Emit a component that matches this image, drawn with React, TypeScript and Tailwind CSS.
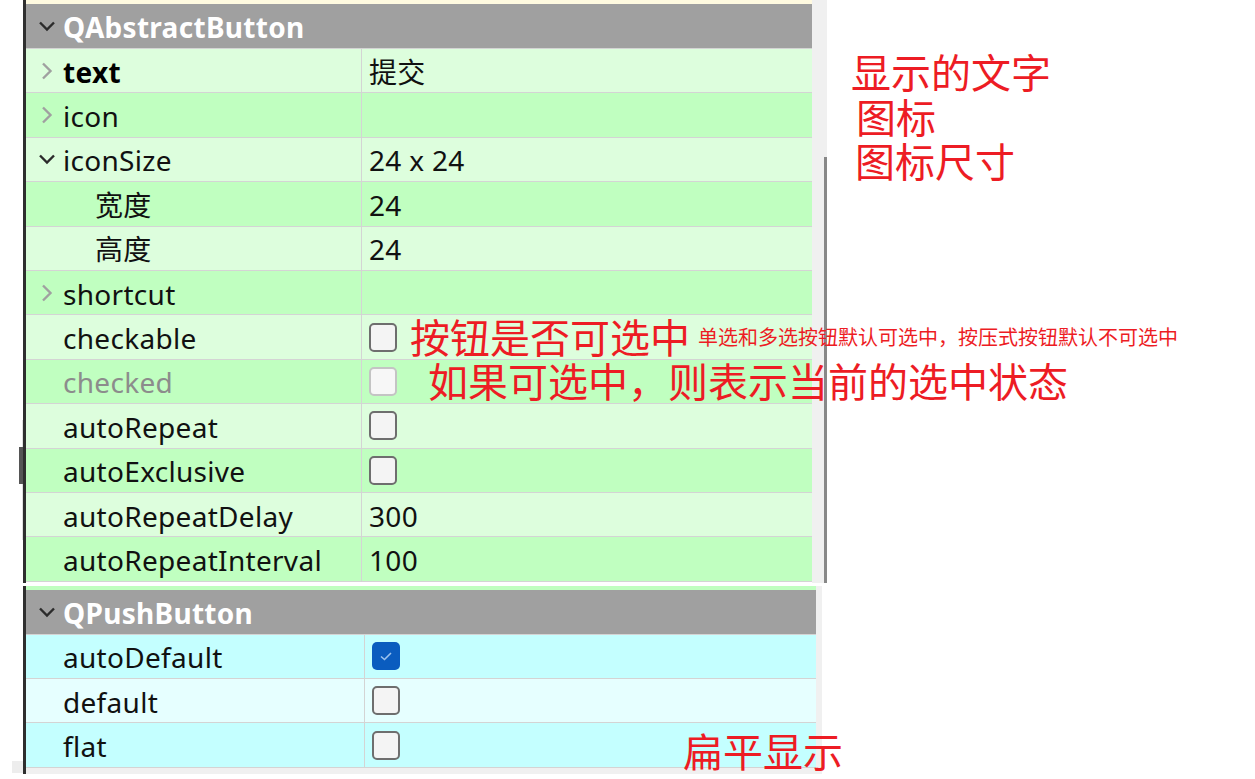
import React from 'react';

type Row = {
  name: string;
  value?: string;
  arrow?: 'right' | 'down';
  bold?: boolean;
  indent?: boolean;
  disabled?: boolean;
  check?: 'off' | 'on';
  bg: string;
};

const abstractRows: Row[] = [
  { name: 'text', bold: true, arrow: 'right', value: '提交', bg: 'bg-[#ddfedd]' },
  { name: 'icon', arrow: 'right', bg: 'bg-[#c0ffc0]' },
  { name: 'iconSize', arrow: 'down', value: '24 x 24', bg: 'bg-[#ddfedd]' },
  { name: '宽度', indent: true, value: '24', bg: 'bg-[#c0ffc0]' },
  { name: '高度', indent: true, value: '24', bg: 'bg-[#ddfedd]' },
  { name: 'shortcut', arrow: 'right', bg: 'bg-[#c0ffc0]' },
  { name: 'checkable', check: 'off', bg: 'bg-[#ddfedd]' },
  { name: 'checked', check: 'off', disabled: true, bg: 'bg-[#c0ffc0]' },
  { name: 'autoRepeat', check: 'off', bg: 'bg-[#ddfedd]' },
  { name: 'autoExclusive', check: 'off', bg: 'bg-[#c0ffc0]' },
  { name: 'autoRepeatDelay', value: '300', bg: 'bg-[#ddfedd]' },
  { name: 'autoRepeatInterval', value: '100', bg: 'bg-[#c0ffc0]' },
];

const pushRows: Row[] = [
  { name: 'autoDefault', check: 'on', bg: 'bg-[#c4ffff]' },
  { name: 'default', check: 'off', bg: 'bg-[#e6ffff]' },
  { name: 'flat', check: 'off', bg: 'bg-[#c4ffff]' },
];

function Chevron({ dir }: { dir: 'right' | 'down' }) {
  if (dir === 'right') {
    return (
      <svg width="16" height="20" viewBox="0 0 16 20" className="shrink-0">
        <path d="M4 2.5 L11.5 10 L4 17.5" fill="none" stroke="#a0a0a0" strokeWidth="2.4" />
      </svg>
    );
  }
  return (
    <svg width="18" height="12" viewBox="0 0 18 12" className="shrink-0">
      <path d="M2 2.5 L9 9.5 L16 2.5" fill="none" stroke="#2b2b2b" strokeWidth="2.4" />
    </svg>
  );
}

function CheckBox({ on, disabled }: { on?: boolean; disabled?: boolean }) {
  if (on) {
    return (
      <div className="w-[28px] h-[28px] rounded-[5px] bg-[#0a5cbf] flex items-center justify-center">
        <svg width="16" height="12" viewBox="0 0 16 12">
          <path d="M3 6.5 L6.5 9.5 L13 3" fill="none" stroke="#9cc3ee" strokeWidth="1.6" />
        </svg>
      </div>
    );
  }
  return (
    <div
      className={`w-[28px] h-[29px] rounded-[5px] border-2 ${
        disabled ? 'border-[#c4c4c4] bg-[#f7f7f7]' : 'border-[#6e6e6e] bg-[#f4f4f4]'
      }`}
    />
  );
}

function PropRow({ row, split }: { row: Row; split: number }) {
  return (
    <div className={`flex h-[44.4px] box-border border-b border-[#d4d4d4] ${row.bg}`}>
      <div
        className="flex items-center h-full border-r border-[#d4d4d4] shrink-0"
        style={{ width: split }}
      >
        <div className="w-[37px] flex items-center justify-center pl-[4px]">
          {row.arrow && <Chevron dir={row.arrow} />}
        </div>
        <span
          className={`text-[28px] leading-none tracking-[0.3px] pt-[2px] ${row.indent ? 'pl-[32px]' : ''} ${
            row.bold ? 'font-bold text-black' : row.disabled ? 'text-[#8c8c8c]' : 'text-[#111]'
          }`}
        >
          {row.name}
        </span>
      </div>
      <div className="flex items-center pl-[7px] flex-1">
        {row.check ? (
          <CheckBox on={row.check === 'on'} disabled={row.disabled} />
        ) : (
          <span className="text-[28px] leading-none text-[#111] tracking-[0.3px] pt-[2px]">{row.value}</span>
        )}
      </div>
    </div>
  );
}

function Header({ title }: { title: string }) {
  return (
    <div className="flex items-center h-[45px] box-border border-b border-[#d4d4d4] bg-[#a0a0a0]">
      <div className="w-[37px] flex items-center justify-center pl-[4px]">
        <Chevron dir="down" />
      </div>
      <span className="text-[28px] leading-none font-bold text-white tracking-[0.3px] pt-[2px]">{title}</span>
    </div>
  );
}

const note = 'absolute text-[#ed1c24] whitespace-nowrap';

export default function App() {
  return (
    <div
      className="relative w-[1255px] h-[779px] bg-white overflow-hidden"
      style={{ fontFamily: '"Noto Sans", "Noto Sans CJK SC", sans-serif' }}
    >
      {/* upper property panel */}
      <div className="ml-[23px] flex w-[804px]">
        <div className="w-[789px] border-l-[3px] border-[#2f2f2f] pb-[1px]">
          <div className="h-[4px] bg-[#fffae0]" />
          <Header title="QAbstractButton" />
          {abstractRows.map((r) => (
            <PropRow key={r.name} row={r} split={336} />
          ))}
        </div>
        <div className="w-[15px] bg-[#f0f0f0] flex justify-end">
          <div className="w-[3px] mt-[157px] bg-[#888]" />
        </div>
      </div>

      {/* lower property panel */}
      <div className="ml-[23px] mt-[3px] flex w-[799px]">
        <div className="w-[793px] border-l-[3px] border-[#2f2f2f]">
          <div className="h-[4px] bg-[#c0ffc0]" />
          <Header title="QPushButton" />
          {pushRows.map((r) => (
            <PropRow key={r.name} row={r} split={339} />
          ))}
          <div className="h-[6px] bg-[#f0f0f0]" />
        </div>
        <div className="w-[6px] bg-[#f0f0f0]" />
      </div>

      {/* stray scrollbar bits on the left edge */}
      <div className="absolute left-[22px] top-[420px] w-[1px] h-[120px] bg-[#e0e0e0]" />
      <div className="absolute left-[19px] top-[447px] w-[4px] h-[37px] bg-[#555]" />
      <div className="absolute left-[12px] top-[761px] w-[11px] h-[12px] bg-[#ededed]" />

      {/* annotations */}
      <div className={`${note} left-[851px] top-[55px] text-[40px] leading-[36px]`}>显示的文字</div>
      <div className={`${note} left-[856px] top-[100px] text-[40px] leading-[36px]`}>图标</div>
      <div className={`${note} left-[855px] top-[144px] text-[40px] leading-[36px]`}>图标尺寸</div>
      <div className={`${note} left-[410px] top-[320px] text-[40px] leading-[36px]`}>按钮是否可选中</div>
      <div className={`${note} left-[698px] top-[328px] text-[20px] leading-none`}>
        单选和多选按钮默认可选中，按压式按钮默认不可选中
      </div>
      <div className={`${note} left-[428px] top-[364px] text-[40px] leading-[36px]`}>如果可选中，则表示当前的选中状态</div>
      <div className={`${note} left-[683px] top-[734px] text-[40px] leading-[36px]`}>扁平显示</div>
    </div>
  );
}
